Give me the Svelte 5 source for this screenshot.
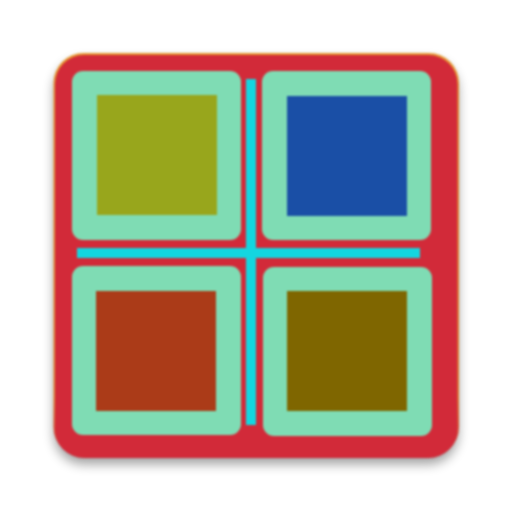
<script>
  const panels = [
    { x: 72, y: 71, ix: 97, iy: 95, fill: '#98a61c' },
    { x: 262, y: 71, ix: 287, iy: 96, fill: '#1a4fa6' },
    { x: 72, y: 266, ix: 96, iy: 291, fill: '#ab3b18' },
    { x: 263, y: 267, ix: 287, iy: 291, fill: '#7f6600' }
  ];
</script>

<svg class="icon" viewBox="0 0 512 512" width="512" height="512" role="img" aria-label="Four squares icon">
  <defs>
    <filter id="shadow" x="-10%" y="-10%" width="120%" height="125%" color-interpolation-filters="sRGB">
      <feGaussianBlur in="SourceAlpha" stdDeviation="6" />
      <feOffset dy="6" />
      <feComponentTransfer><feFuncA type="linear" slope="0.38" /></feComponentTransfer>
    </filter>
    <filter id="soft" x="-5%" y="-5%" width="110%" height="110%" color-interpolation-filters="sRGB">
      <feGaussianBlur stdDeviation="0.8" />
    </filter>
    <linearGradient id="rim" x1="0" y1="0" x2="0" y2="1">
      <stop offset="0" stop-color="#e89a30" />
      <stop offset="0.85" stop-color="#e08a30" />
      <stop offset="1" stop-color="#d22a39" />
    </linearGradient>
  </defs>

  <rect x="54" y="54" width="404" height="404" rx="30" fill="#000" filter="url(#shadow)" />
  <g filter="url(#soft)">
    <rect x="53.5" y="53" width="405.5" height="404" rx="30" fill="url(#rim)" />
    <rect x="55" y="55" width="402.5" height="403" rx="29" fill="#d22a39" />
    {#each panels as p}
      <rect x={p.x} y={p.y} width="169" height="169" rx="11" fill="#7fdcb4" />
      <rect x={p.ix} y={p.iy} width="120" height="120" fill={p.fill} />
    {/each}
    <rect x="246" y="79" width="10" height="346" fill="#13d6e0" />
    <rect x="77" y="248" width="343" height="10" fill="#13d6e0" />
  </g>
</svg>

<style>
  :global(body) {
    margin: 0;
    background: #fff;
  }

  .icon {
    display: block;
  }
</style>
